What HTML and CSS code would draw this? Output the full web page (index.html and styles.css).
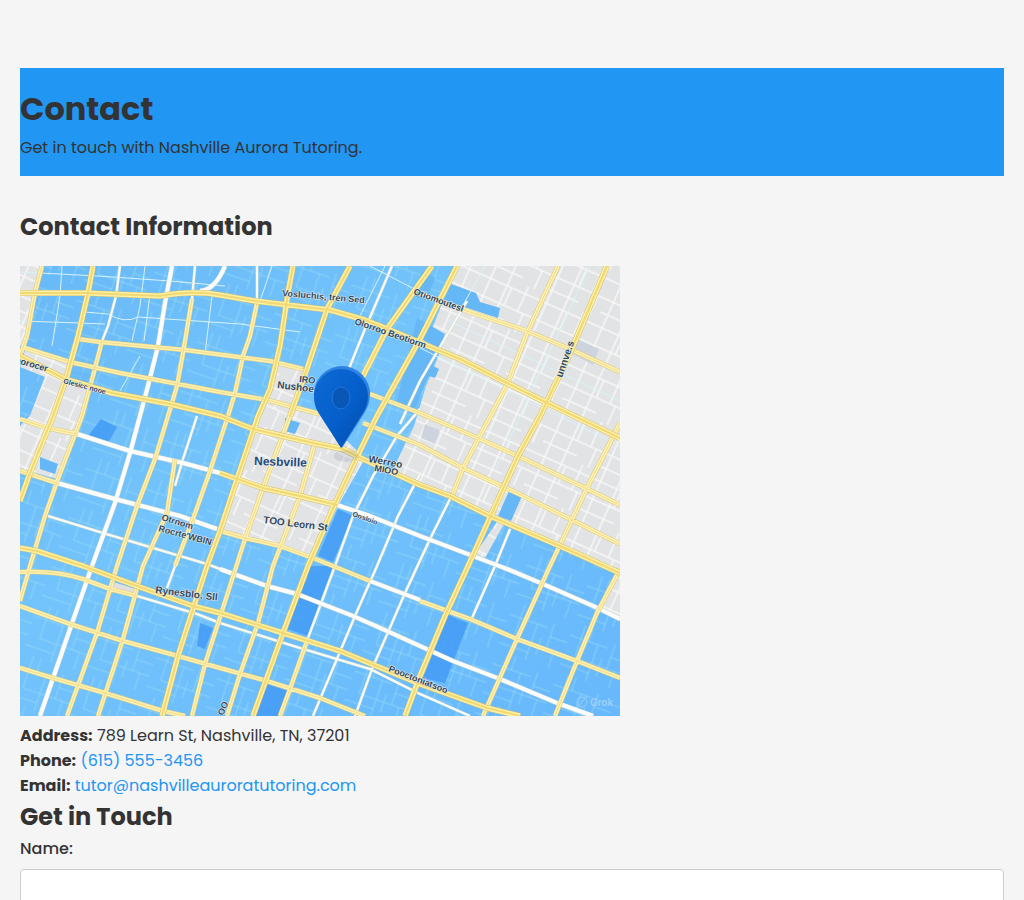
FILE: index.html
```html
<!DOCTYPE html>
<html lang="en">
<head>
<meta charset="utf-8">
<meta name="viewport" content="width=device-width, initial-scale=1">
<title>Contact</title>
<link rel="stylesheet" href="styles.css">
</head>
<body>
<header class="page-header">
  <h1 class="page-title">Contact</h1>
  <p class="page-intro">Get in touch with Nashville Aurora Tutoring.</p>
</header>
<main>
  <section class="contact-info">
    <h2 class="section-title">Contact Information</h2>
    <svg class="map" viewBox="0 0 600 450" role="img" aria-label="Map of Nashville">
      <defs>
        <pattern id="lanes" width="64" height="52" patternUnits="userSpaceOnUse" patternTransform="rotate(19)">
          <path d="M0 14H40M12 0V34M12 34H64M30 14V52M46 8V34M46 22H64M0 44H30M54 34V52M20 0V14M38 26V44" fill="none" stroke="#9be0f3" stroke-width="1" opacity=".6"/>
        </pattern>
        <pattern id="alleys" width="61" height="47" patternUnits="userSpaceOnUse" patternTransform="rotate(24)">
          <path d="M0 8H61M0 27H61M0 41H37M8 0V47M26 0V47M31 8V27M46 0V27M52 27V47" fill="none" stroke="#f8f8f7" stroke-width="1.5"/>
        </pattern>
        <linearGradient id="water" x1="0" y1="0" x2="1" y2="1">
          <stop offset="0" stop-color="#68b9f7"/><stop offset=".4" stop-color="#73c3fc"/><stop offset="1" stop-color="#67b8fc"/>
        </linearGradient>
        <linearGradient id="pin" x1="0" y1="0" x2="1" y2="1">
          <stop offset="0" stop-color="#0f69d3"/><stop offset=".5" stop-color="#0560cc"/><stop offset="1" stop-color="#034cac"/>
        </linearGradient>
        <path id="major" d="M0 27 65 27 140 30Q175 24 200 29L235 35 310 44 345 54 370 64 413 82 440 93 487 117 523 135 600 172M0 90 45 113 92 127 150 138 200 150 233 163 293 177 323 183 343 193 400 219 430 230 470 250 540 280 600 307M0 282 17 285 63 300 117 320 173 340 200 347 263 367 320 385 400 418 467 442 500 450M73 0 68 27 58 70 47 110 33 150 10 207 0 235M273 0 268 27 260 80 250 123 238 150 217 213 200 265 187 300 173 343 158 390 142 450M330 0 307 43 287 103 270 150M412 0 367 63 343 110 322 155M437 0 400 73 357 150 335 195 314 240 288 300 263 367 233 450M587 0 550 87 520 150 498 190 472 247 448 300 425 350 400 410 385 450M200 207 243 222 280 230 317 239"/>
        <path id="medium" d="M22 0 15 27 7 70 0 90M400 28 450 46 507 65 550 83 600 106M58 73 80 76 165 84 250 95 283 103M350 128 400 147 460 173 500 191 565 222 600 239M5 82 50 96 100 107 200 126 247 134 300 148M343 157 400 179 443 202 503 230 550 253 600 278M0 153 27 162 57 168M0 205 37 217M82 75 73 110 62 150 38 213 25 250 10 300 0 335M172 33 163 87 157 120 148 150 135 193 117 240 97 300 77 367 47 450M237 37 230 70 223 90 215 127 208 150 190 205 173 253 155 300M155 193 147 247 123 300 103 373 78 450M270 150 243 222 225 273 202 345 185 398 172 450M295 177 280 230 253 300 238 357 220 408 207 450M0 306Q35 304 63 313L90 323 117 330M0 340 50 358 103 375 158 390 200 402 247 415 300 432 345 450M0 402 33 412 85 427 143 445 165 450M200 265 225 272 260 280 293 292 313 300 350 315M400 335 450 353 497 373 557 395 600 412M538 0 507 67 488 117 443 202 432 230M600 157 567 222 530 300 497 373 463 450M600 303 577 347 557 395 535 450M288 372 270 423 260 450"/>
        <path id="white" d="M152 0 145 37 138 80 128 120 110 187 95 237 72 300 50 363 20 450M57 168 110 185 163 197 200 207M37 217 95 233 160 250 197 263M317 239 350 250 400 270 453 290 487 303 523 318 580 343 600 353M350 315 400 334M200 303 247 320 277 328 333 350 367 365 400 380 433 395 480 413 537 437 573 450M205 0Q195 24 180 25"/>
        <path id="minor" d="M175 0 172 33M237 0 237 37M177 150 163 193 155 220M155 300 147 322M100 0 96 30 88 60 82 75M28 250 83 267 133 282 187 298 200 303M117 330 177 348 200 357 280 382 350 403 400 428 450 450M400 143 377 170 353 210 333 250 315 300 288 372M400 208 378 250 357 300 335 350 293 450M430 233 410 273 385 327 352 403 335 450M490 263 475 300 452 352M372 0 345 63 328 105M402 75 440 95M447 35 400 115 380 158"/>
        <path id="paths" d="M0 6 78 10 150 15 205 20M65 46 88 48Q105 58 118 51L220 58 280 66M0 55 60 57 85 58M350 0 400 26M130 28 124 75M192 30 185 88M42 0 40 30 32 80M125 0 120 40 112 75M120 90 100 125M365 0 335 60M252 0 240 35M400 82 600 180M425 53 600 135M465 0 420 80 390 135M570 0 528 89 475 205"/>
        <path id="districts" d="M437 0H600V307L540 280 470 250 400 219 372 205 394 160 406 120 425 74 410 68ZM0 0H21L14 35 5 80H0ZM5 84 49 97 45 112 70 121 62 150 38 213 0 203 0 160 10 150 25 111 0 101ZM255 98 285 103 272 139 300 150 345 192 318 240 294 291 203 264 240 150ZM477 256 484 258 465 292 455 288ZM600 307V355L578 343Z"/>
      </defs>
      <rect width="600" height="450" fill="url(#water)"/>
      <rect width="600" height="450" fill="url(#lanes)"/>
      <use href="#districts" fill="#e2e3e5"/>
      <use href="#districts" fill="url(#alleys)"/>
      <path d="M93 316 116 323 114 330 91 325Z" fill="#e2dfe0"/>
      <g fill="#65b7f5">
        <path d="M431 18 456 27 460 36 480 42 478 52 423 34ZM402 5 415 12 406 34 394 30ZM397 52 425 68 410 106 394 145 377 135ZM409 98 419 103 415 112 406 109ZM20 191 38 198 35 208 20 203ZM265 152 280 157 275 168 265 165ZM489 225 502 230 491 255 478 250Z"/>
        <path d="M50 104 73 108 70 117 48 112Z" opacity=".6"/>
      </g>
      <g fill="#439bf4" opacity=".85">
        <path d="M318 243 333 250 313 296 298 290ZM290 300 313 300 288 370 267 363ZM428 349 448 357 425 417 403 412ZM81 153 97 161 88 177 68 170ZM180 357 193 362 185 383 177 380ZM246 418 268 425 258 450 236 450Z"/>
      </g>
      <path d="M405 158 420 164 415 178 401 172ZM557 73 579 83 573 99 551 87Z" fill="#ced4dd"/>
      <g fill="none" stroke-linejoin="round">
        <use href="#paths" stroke="#d8f3f7" stroke-width="1"/>
        <use href="#minor" stroke="#c8dcd8" stroke-width="3"/>
        <use href="#minor" stroke="#fbfbf1" stroke-width="2"/>
        <use href="#white" stroke="#c9d8d5" stroke-width="5"/>
        <use href="#white" stroke="#fcfdfb" stroke-width="4"/>
        <use href="#medium" stroke="#d4c783" stroke-width="5"/>
        <use href="#medium" stroke="#fff1ad" stroke-width="4"/>
        <use href="#medium" stroke="#efdc90" stroke-width="1"/>
        <use href="#major" stroke="#cfbd70" stroke-width="6"/>
        <use href="#major" stroke="#fff0a2" stroke-width="5"/>
        <use href="#major" stroke="#f0d874" stroke-width="2"/>
      </g>
      <g class="map-labels">
        <text transform="translate(262 30) rotate(5)">Vosluchis, tren Sed</text>
        <text transform="translate(334 58) rotate(19)" class="small">Olorroo Beotiorm</text>
        <text transform="translate(393 28) rotate(20)" class="small">Otiomoutesl</text>
        <text transform="translate(279 116) rotate(6)" class="small">IRO</text>
        <text transform="translate(257 122) rotate(7)" class="large">Nushoe</text>
        <text transform="translate(234 199) rotate(2)" class="city">Nesbville</text>
        <text transform="translate(348 196) rotate(10)" class="large">Werreo</text>
        <text transform="translate(354 205) rotate(10)" class="small">MIOO</text>
        <text transform="translate(243 257) rotate(7)" class="large">TOO Leorn St</text>
        <text transform="translate(332 250) rotate(20)" class="tiny">Oosloio</text>
        <text transform="translate(141 254) rotate(17)" class="small">Otrnom</text>
        <text transform="translate(138 265) rotate(15)" class="small">Rocrte'WBIN</text>
        <text transform="translate(135 327) rotate(7)" class="large">Rynesblo. Sll</text>
        <text transform="translate(368 405) rotate(21)" class="small">Pooctoniatsoo</text>
        <text transform="translate(542 112) rotate(-71)" class="large">unnve.s</text>
        <text transform="translate(0 98) rotate(16)" class="small">orocer</text>
        <text transform="translate(43 117) rotate(15)" class="tiny">Glesicc nooe</text>
        <text transform="translate(203 450) rotate(-66)" class="small">OO</text>
      </g>
      <ellipse cx="326" cy="190" rx="12" ry="6" fill="#7d8796" opacity=".2"/>
      <path d="M322 182 299 146C296 140 294 135 294 128A28 28 0 0 1 350 128C350 135 348 141 345 146Z" fill="#2f83e2"/>
      <path d="M321 182 298 146C295 141 294 136 294 130A27 27 0 0 1 348 130C348 137 346 142 343 147Z" fill="url(#pin)"/>
      <ellipse cx="321" cy="132" rx="9" ry="11" fill="#0857b7" stroke="#2077d8" stroke-width="1"/>
      <g opacity=".4" fill="none" stroke="#e5f1f6" stroke-width="1">
        <circle cx="562" cy="436" r="5"/><path d="m557 442 10-12"/>
      </g>
      <text x="570" y="440" class="watermark">Grok</text>
    </svg>
    <address class="details">
      <p><strong>Address:</strong> 789 Learn St, Nashville, TN, 37201</p>
      <p><strong>Phone:</strong> <a href="tel:6155553456">(615) 555-3456</a></p>
      <p><strong>Email:</strong> <a href="mailto:tutor@nashvilleauroratutoring.com">tutor@nashvilleauroratutoring.com</a></p>
    </address>
  </section>
  <section>
    <h2 class="form-title">Get in Touch</h2>
    <form class="contact-form">
      <label for="name">Name:</label>
      <input id="name" name="name" type="text">
    </form>
  </section>
</main>
</body>
</html>
```
FILE: styles.css
```css
* { box-sizing: border-box; margin: 0; padding: 0; }
body {
  padding: 68px 20px 20px;
  background: #f5f5f5;
  color: #333;
  font-family: Poppins, Inter, sans-serif;
  font-size: 16px;
  line-height: 25px;
}
.page-header { padding: 20px 0 16px; background: #2196f3; }
.page-title { margin-bottom: 5px; font-size: 32px; line-height: 42px; }
.section-title, .form-title { font-size: 24px; line-height: 32px; }
.contact-info { padding-top: 35px; }
.section-title { margin-bottom: 23px; }
.map { display: block; width: 100%; max-width: 600px; height: auto; }
.details { padding-top: 7px; font-style: normal; }
a { color: #2196f3; text-decoration: none; }
.form-title { margin: 3px 0; }
.contact-form label { display: block; margin-bottom: 8px; font-weight: 500; }
.contact-form input {
  display: block;
  width: 100%;
  padding: 12px;
  border: 1px solid #ccc;
  border-radius: 4px;
  background: #fff;
  font: inherit;
}
.map-labels {
  fill: #34485b;
  stroke: #e9f0f2;
  stroke-width: 1px;
  paint-order: stroke;
  font-family: "Liberation Sans", sans-serif;
  font-size: 9px;
  font-weight: bold;
}
.small { font-size: 9px; }
.tiny { font-size: 7px; }
.large { font-size: 10px; }
.city { font-size: 12px; fill: #24487a; }
.watermark { fill: #e5f1f6; opacity: .4; font-family: Inter, sans-serif; font-size: 10px; font-weight: bold; }
```
